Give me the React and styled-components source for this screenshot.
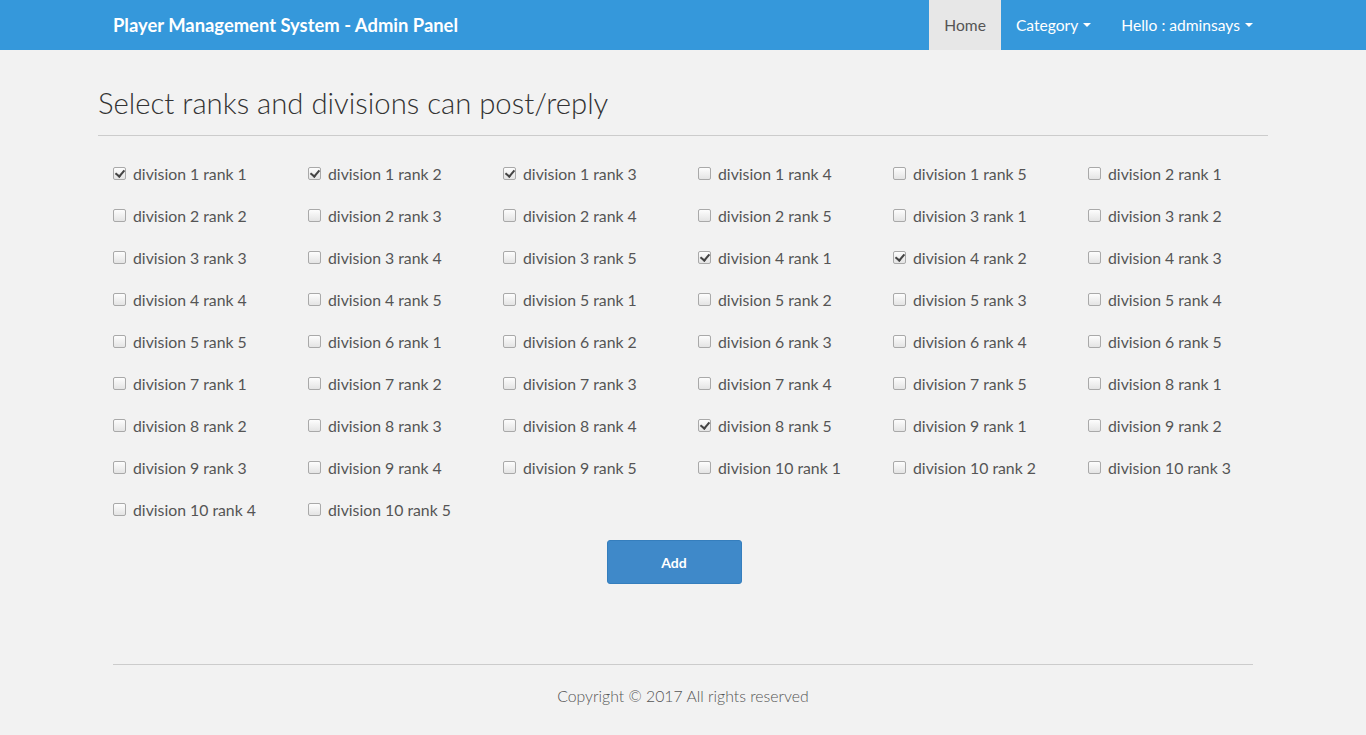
import React from 'react';
import styled, { createGlobalStyle } from 'styled-components';

const GlobalStyle = createGlobalStyle`
  html, body {
    margin: 0;
    padding: 0;
    background: #f2f2f2;
    font-family: Lato, "Open Sans", "Liberation Sans", sans-serif;
    color: #555;
  }
  * { box-sizing: border-box; }
`;

const checked = ['1-1', '1-2', '1-3', '4-1', '4-2', '8-5'];

const items = [];
for (let d = 1; d <= 10; d += 1) {
  for (let r = 1; r <= 5; r += 1) {
    items.push({ key: `${d}-${r}`, label: `division ${d} rank ${r}` });
  }
}

export default function App() {
  return (
    <>
      <GlobalStyle />
      <Navbar>
        <NavInner>
          <Brand>Player Management System - Admin Panel</Brand>
          <NavList>
            <NavItem active>Home</NavItem>
            <NavItem>
              Category
              <Caret />
            </NavItem>
            <NavItem>
              Hello : adminsays
              <Caret />
            </NavItem>
          </NavList>
        </NavInner>
      </Navbar>
      <Container>
        <PageHeader>Select ranks and divisions can post/reply</PageHeader>
        <Grid>
          {items.map((item) => (
            <CheckLabel key={item.key}>
              <Box type="checkbox" defaultChecked={checked.includes(item.key)} />
              <span>{item.label}</span>
            </CheckLabel>
          ))}
        </Grid>
        <ButtonRow>
          <AddButton type="button">Add</AddButton>
        </ButtonRow>
        <Footer>
          <p>Copyright © 2017 All rights reserved</p>
        </Footer>
      </Container>
    </>
  );
}

const Navbar = styled.nav`
  background: #3598db;
  height: 50px;
`;

const NavInner = styled.div`
  width: 1170px;
  margin: 0 auto;
  display: flex;
  justify-content: space-between;
  align-items: stretch;
  height: 50px;
`;

const Brand = styled.div`
  padding: 0 15px;
  display: flex;
  align-items: center;
  color: #fff;
  font-weight: 700;
  font-size: 18.4px;
  padding-bottom: 1px;
`;

const NavList = styled.div`
  display: flex;
`;

const NavItem = styled.div`
  display: flex;
  align-items: center;
  padding: 0 15px 1px;
  font-size: 15.6px;
  color: ${(p) => (p.active ? '#555' : '#fff')};
  background: ${(p) => (p.active ? '#e7e7e7' : 'transparent')};
`;

const Caret = styled.span`
  display: inline-block;
  width: 0;
  height: 0;
  margin-left: 5px;
  border-top: 4px solid #fff;
  border-left: 4px solid transparent;
  border-right: 4px solid transparent;
`;

const Container = styled.div`
  width: 1170px;
  margin: 0 auto;
`;

const PageHeader = styled.h2`
  margin: 37px 0 0;
  padding-bottom: 16px;
  border-bottom: 1px solid #ccc;
  font-size: 29.3px;
  font-weight: 300;
  line-height: 1.1;
  color: #333;
`;

const Grid = styled.div`
  display: grid;
  grid-template-columns: repeat(6, 1fr);
  grid-auto-rows: 42px;
  margin-top: 16px;
`;

const CheckLabel = styled.label`
  display: flex;
  align-items: center;
  padding: 0 15px;
  font-size: 15.8px;
  color: #555;

  span {
    margin-left: 7px;
  }
`;

const Box = styled.input`
  appearance: none;
  -webkit-appearance: none;
  margin: 0;
  width: 13px;
  height: 13px;
  border: 1px solid #a9a9a9;
  border-radius: 2px;
  background: linear-gradient(#fdfdfd, #e4e4e4);
  position: relative;

  &:checked::after {
    content: '';
    position: absolute;
    left: 3px;
    top: 0px;
    width: 4px;
    height: 7px;
    border-right: 2px solid #444;
    border-bottom: 2px solid #444;
    transform: rotate(40deg);
  }
`;

const ButtonRow = styled.div`
  display: flex;
  justify-content: center;
  padding-right: 18px;
  margin-top: 10px;
`;

const AddButton = styled.button`
  width: 135px;
  height: 44px;
  background: #3f89c9;
  border: 1px solid #357ebd;
  border-radius: 3px;
  color: #fff;
  font-family: Lato, "Liberation Sans", sans-serif;
  font-size: 14px;
  font-weight: 700;
`;

const Footer = styled.footer`
  margin: 80px 15px 0;
  border-top: 1px solid #ccc;
  text-align: center;

  p {
    margin: 0;
    padding-top: 21px;
    font-size: 15.8px;
    font-weight: 300;
    color: #555;
  }
`;
